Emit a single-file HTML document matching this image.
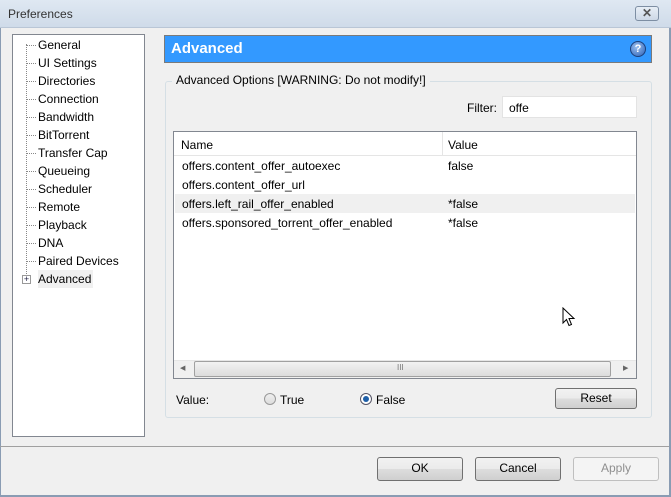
<!DOCTYPE html>
<html><head><style>
*{box-sizing:border-box;margin:0;padding:0}
body{width:671px;height:497px;overflow:hidden;background:#f0f0f0;font-family:"Liberation Sans",sans-serif;font-size:12px;color:#000;position:relative}
.a{position:absolute}
.tree div{position:absolute;left:25px;height:18px;line-height:18px}
.dot{position:absolute;left:-12px;top:9px;width:10px;border-top:1px dotted #888}
.btn{position:absolute;border:1px solid #707070;border-radius:3px;background:linear-gradient(#f2f2f2 0%,#ebebeb 50%,#dddddd 51%,#cfcfcf 100%);text-align:center;line-height:21px}
.row{position:absolute;left:1px;right:1px;height:19px;line-height:20px}
.row span{position:absolute}
</style></head><body>
<div class="a" style="left:0;top:0;width:671px;height:28px;background:linear-gradient(#dfe8f2,#cfdbe9);border-bottom:1px solid #b9c6d6"></div>
<div class="a" style="left:8px;top:7px;font-size:12px;color:#333">Preferences</div>
<div class="a" style="left:635px;top:6px;width:24px;height:15px;border:1px solid #7d8ea3;border-radius:3px;background:linear-gradient(#e7eef6,#cdd8e6);text-align:center;font-size:12px;line-height:13px;font-weight:bold;color:#555">✕</div>
<div class="a" style="left:0;top:28px;width:1px;height:469px;background:#8a9cb3"></div>
<div class="a" style="left:669px;top:28px;width:2px;height:469px;background:#8a9cb3"></div>
<div class="a" style="left:0;top:495px;width:671px;height:2px;background:#8a9cb3"></div>

<div class="a tree" style="left:12px;top:34px;width:133px;height:403px;background:#fff;border:1px solid #828790">
<div class="a" style="left:13px;top:9px;height:236px;border-left:1px dotted #888"></div>
<div style="top:1px"><i class="dot"></i>General</div>
<div style="top:19px"><i class="dot"></i>UI Settings</div>
<div style="top:37px"><i class="dot"></i>Directories</div>
<div style="top:55px"><i class="dot"></i>Connection</div>
<div style="top:73px"><i class="dot"></i>Bandwidth</div>
<div style="top:91px"><i class="dot"></i>BitTorrent</div>
<div style="top:109px"><i class="dot"></i>Transfer Cap</div>
<div style="top:127px"><i class="dot"></i>Queueing</div>
<div style="top:145px"><i class="dot"></i>Scheduler</div>
<div style="top:163px"><i class="dot"></i>Remote</div>
<div style="top:181px"><i class="dot"></i>Playback</div>
<div style="top:199px"><i class="dot"></i>DNA</div>
<div style="top:217px"><i class="dot"></i>Paired Devices</div>
<div style="top:235px;background:#f0f0f0;padding-right:2px">Advanced</div>
<span class="a" style="left:9px;top:240px;width:9px;height:9px;border:1px solid #999;background:#fff;font-size:9px;line-height:7px;text-align:center;color:#224">+</span>
</div>

<div class="a" style="left:164px;top:35px;width:488px;height:28px;background:#3399ff;border:1px solid #7a7a7a"></div>
<div class="a" style="left:171px;top:40px;color:#fff;font-weight:bold;font-size:15px">Advanced</div>
<div class="a" style="left:630px;top:41px;width:16px;height:16px;border-radius:50%;background:radial-gradient(circle at 40% 35%,#9bc0f0,#2b5fb5);border:1px solid #1c3f7a;color:#fff;font-weight:bold;font-size:11px;text-align:center;line-height:14px">?</div>

<div class="a" style="left:165px;top:81px;width:487px;height:337px;border:1px solid #d5dfe5;border-radius:3px"></div>
<div class="a" style="left:172px;top:73px;background:#f0f0f0;padding:0 4px">Advanced Options [WARNING: Do not modify!]</div>
<div class="a" style="left:467px;top:101px">Filter:</div>
<div class="a" style="left:502px;top:96px;width:135px;height:22px;background:#fff;border:1px solid #e3e3e3;padding:4px 6px">offe</div>

<div class="a" style="left:173px;top:131px;width:464px;height:248px;background:#fff;border:1px solid #828790">
<div class="a" style="left:0;top:0;width:462px;height:24px;border-bottom:1px solid #e5e5e5"></div>
<div class="a" style="left:268px;top:0;height:24px;border-left:1px solid #e5e5e5"></div>
<div class="a" style="left:7px;top:6px">Name</div>
<div class="a" style="left:274px;top:6px">Value</div>
<div class="row" style="top:24px"><span style="left:7px">offers.content_offer_autoexec</span><span style="left:273px">false</span></div>
<div class="row" style="top:43px"><span style="left:7px">offers.content_offer_url</span></div>
<div class="row" style="top:62px;background:#f0f0f0"><span style="left:7px">offers.left_rail_offer_enabled</span><span style="left:273px">*false</span></div>
<div class="row" style="top:81px"><span style="left:7px">offers.sponsored_torrent_offer_enabled</span><span style="left:273px">*false</span></div>
<div class="a" style="left:0;top:228px;width:462px;height:18px;background:#f0f0f0;border-top:1px solid #e6e6e6"></div>
<div class="a" style="left:6px;top:232px;font-size:7px;color:#666">◀</div>
<div class="a" style="left:449px;top:232px;font-size:7px;color:#666">▶</div>
<div class="a" style="left:20px;top:229px;width:417px;height:16px;border:1px solid #a0a0a0;border-radius:2px;background:linear-gradient(#f2f2f2,#dcdcdc)"></div>
<div class="a" style="left:223px;top:231px;font-size:8px;color:#777">III</div>
</div>

<div class="a" style="left:176px;top:393px">Value:</div>
<div class="a" style="left:264px;top:393px;width:12px;height:12px;border-radius:50%;border:1px solid #999;background:linear-gradient(#eee,#ddd)"></div>
<div class="a" style="left:280px;top:393px">True</div>
<div class="a" style="left:360px;top:393px;width:12px;height:12px;border-radius:50%;border:1px solid #556;background:#fff"><div style="margin:2px;width:6px;height:6px;border-radius:50%;background:#1e5fa8"></div></div>
<div class="a" style="left:376px;top:393px">False</div>
<div class="btn" style="left:555px;top:388px;width:82px;height:21px;line-height:19px">Reset</div>

<div class="a" style="left:0;top:446px;width:669px;border-top:1px solid #a0a0a0"></div>
<div class="btn" style="left:377px;top:457px;width:86px;height:24px">OK</div>
<div class="btn" style="left:475px;top:457px;width:86px;height:24px">Cancel</div>
<div class="btn" style="left:573px;top:457px;width:86px;height:24px;background:#f4f4f4;border-color:#bfbfbf;color:#8f8f8f">Apply</div>

<svg class="a" style="left:562px;top:307px" width="14" height="22" viewBox="0 0 14 22"><path d="M1 1 L1 16 L4.5 12.5 L7 18.5 L9.5 17.5 L7 11.5 L12 11.5 Z" fill="#fff" stroke="#000" stroke-width="1"/></svg>
</body></html>
